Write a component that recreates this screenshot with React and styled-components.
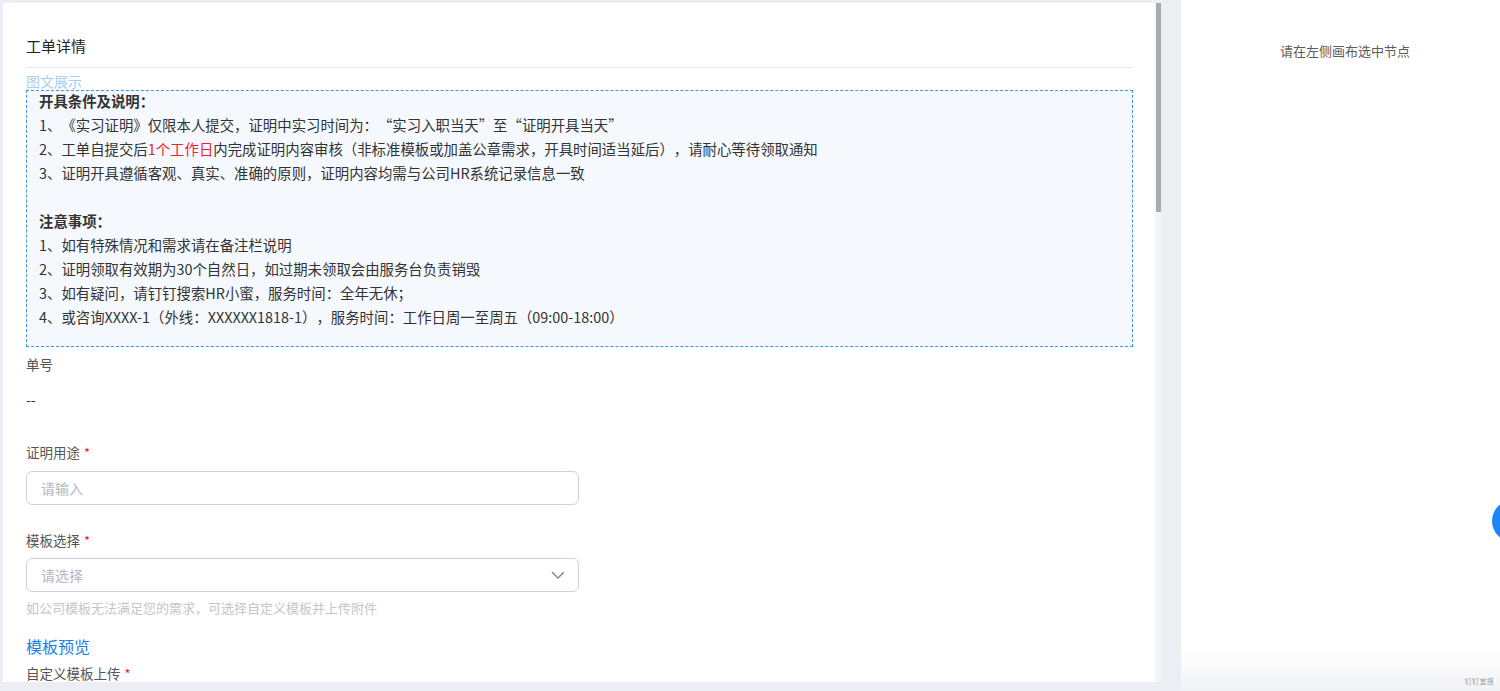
import React from "react";
import styled, { createGlobalStyle } from "styled-components";

const Global = createGlobalStyle`
  html, body { margin: 0; padding: 0; }
  body {
    background: #eceef3;
    font-family: "Noto Sans CJK SC", "Noto Sans", "Liberation Sans", sans-serif;
    color: #333;
    overflow: hidden;
    text-spacing-trim: space-all;
  }
  * { box-sizing: border-box; }
`;

const Page = styled.div`
  position: relative;
  display: flex;
  width: 1500px;
  height: 691px;
  overflow: hidden;
`;

const LeftWrap = styled.div`
  padding: 3px 0 9px 3px;
  flex: none;
`;

const Panel = styled.div`
  display: flex;
  width: 1158px;
  height: 679px;
  background: #fff;
  overflow: hidden;
`;

const Content = styled.div`
  flex: 1;
  padding: 32px 22px 0 23px;
  overflow: hidden;
`;

const Track = styled.div`
  width: 6px;
  background: #f3f4f8;
  display: flex;
  flex-direction: column;
`;

const Thumb = styled.div`
  height: 209px;
  margin-left: 1px;
  background: #a9aaae;
  border-radius: 0 0 1px 1px;
`;

const Title = styled.div`
  font-size: 15px;
  line-height: 22px;
  color: #222;
  padding-bottom: 10px;
  border-bottom: 1px solid #e8e9ec;
`;

const Caption = styled.div`
  margin-top: 4px;
  font-size: 14px;
  line-height: 18px;
  color: #a8cdf3;
`;

const NoticeBox = styled.div`
  border: 1px dashed #3d92ea;
  background: #f5f9fd;
  padding: 0 12px 16px;
  height: 257px;
`;

const NoticeText = styled.div`
  margin-top: -2px;
  font-size: 14.4px;
  line-height: 24px;
  color: #333;
`;

const Line = styled.div`
  height: 24px;
  white-space: nowrap;
  font-weight: ${(p) => (p.$bold ? 700 : 400)};
`;

const Red = styled.span`
  color: #f5222d;
`;

const Label = styled.div`
  margin-top: ${(p) => p.$mt}px;
  font-size: 13.5px;
  line-height: 20px;
  color: #555;
`;

const Star = styled.span`
  color: #f5222d;
  margin-left: 4px;
  font-size: 13px;
`;

const Value = styled.div`
  margin-top: 15px;
  font-size: 14px;
  line-height: 20px;
  color: #333;
`;

const Field = styled.div`
  margin-top: ${(p) => p.$mt}px;
  width: 553px;
  height: 34px;
  border: 1px solid #cfd2d8;
  border-radius: 6px;
  background: rgba(255, 255, 255, 0.6);
  display: flex;
  align-items: center;
  justify-content: space-between;
  padding: 0 12px 0 14px;
  font-size: 14px;
  color: #b4b7be;
`;

const Helper = styled.div`
  margin-top: 6px;
  font-size: 13px;
  line-height: 20px;
  color: #c3c6cc;
`;

const SectionTitle = styled.div`
  margin-top: 17px;
  font-size: 16px;
  line-height: 22px;
  color: #1a7fe6;
`;

const RightPanel = styled.div`
  margin-left: 20px;
  flex: 1;
  background: linear-gradient(to bottom, #fff 0%, #fff 94%, #f1f2f5 100%);
  display: flex;
  flex-direction: column;
  align-items: center;
  padding: 41px 0 0 9px;
`;

const Hint = styled.div`
  font-size: 13px;
  line-height: 20px;
  color: #5c5c5c;
`;

const Brand = styled.div`
  position: absolute;
  right: 6px;
  bottom: 5px;
  font-size: 7px;
  color: #9a9a9a;
  letter-spacing: 0.3px;
`;

const Fab = styled.div`
  position: absolute;
  left: 1492px;
  top: 500px;
  width: 42px;
  height: 42px;
  border-radius: 50%;
  background: #1b87f5;
`;

const Chevron = () => (
  <svg width="16" height="16" viewBox="0 0 16 16" fill="none">
    <path d="M2.5 5.5 L8 11 L13.5 5.5" stroke="#8a8d93" strokeWidth="1.6" strokeLinecap="round" strokeLinejoin="round" />
  </svg>
);

export default function App() {
  return (
    <>
      <Global />
      <Page>
        <LeftWrap>
          <Panel>
            <Content>
              <Title>工单详情</Title>
              <Caption>图文展示</Caption>
              <NoticeBox>
                <NoticeText>
                  <Line $bold>开具条件及说明：</Line>
                  <Line>1、《实习证明》仅限本人提交，证明中实习时间为：“实习入职当天”至“证明开具当天”</Line>
                  <Line>
                    2、工单自提交后<Red>1个工作日</Red>内完成证明内容审核（非标准模板或加盖公章需求，开具时间适当延后），请耐心等待领取通知
                  </Line>
                  <Line>3、证明开具遵循客观、真实、准确的原则，证明内容均需与公司HR系统记录信息一致</Line>
                  <Line />
                  <Line $bold>注意事项：</Line>
                  <Line>1、如有特殊情况和需求请在备注栏说明</Line>
                  <Line>2、证明领取有效期为30个自然日，如过期未领取会由服务台负责销毁</Line>
                  <Line>3、如有疑问，请钉钉搜索HR小蜜，服务时间：全年无休；</Line>
                  <Line>4、或咨询XXXX-1（外线：XXXXXX1818-1），服务时间：工作日周一至周五（09:00-18:00）</Line>
                </NoticeText>
              </NoticeBox>
              <Label $mt={7}>单号</Label>
              <Value>--</Value>
              <Label $mt={33}>
                证明用途<Star>*</Star>
              </Label>
              <Field $mt={8}>请输入</Field>
              <Label $mt={25}>
                模板选择<Star>*</Star>
              </Label>
              <Field $mt={7}>
                请选择
                <Chevron />
              </Field>
              <Helper>如公司模板无法满足您的需求，可选择自定义模板并上传附件</Helper>
              <SectionTitle>模板预览</SectionTitle>
              <Label $mt={6}>
                自定义模板上传<Star>*</Star>
              </Label>
            </Content>
            <Track>
              <Thumb />
            </Track>
          </Panel>
        </LeftWrap>
        <RightPanel>
          <Hint>请在左侧画布选中节点</Hint>
        </RightPanel>
        <Fab />
        <Brand>钉钉宜搭</Brand>
      </Page>
    </>
  );
}
